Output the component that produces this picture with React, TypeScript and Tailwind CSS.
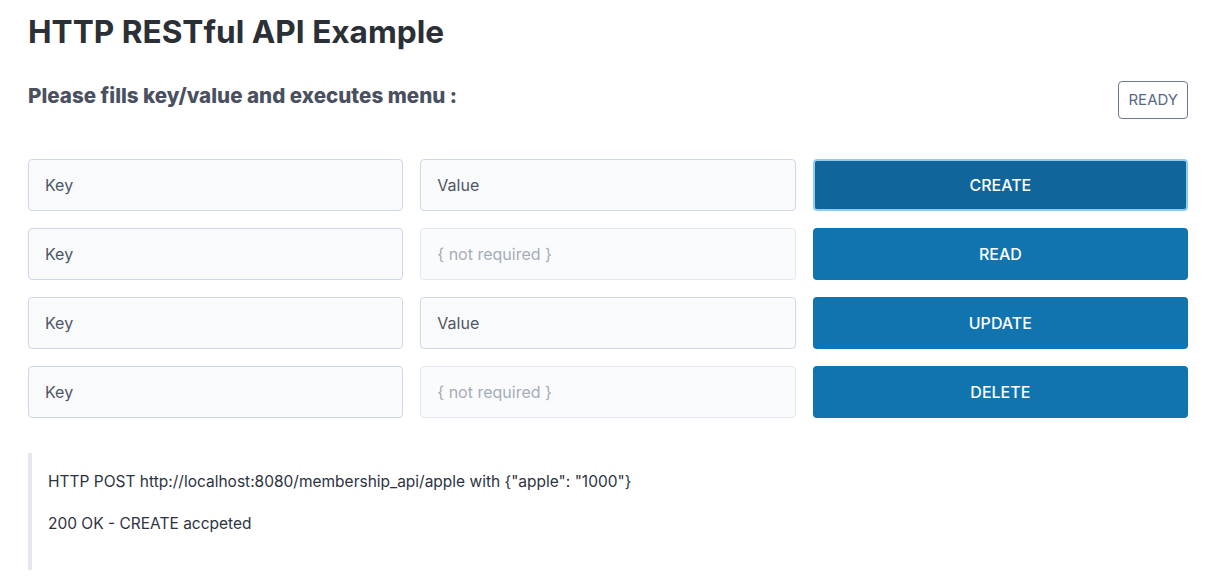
import { useState } from "react";

const rows = [
  { action: "CREATE", needsValue: true },
  { action: "READ", needsValue: false },
  { action: "UPDATE", needsValue: true },
  { action: "DELETE", needsValue: false },
];

const App = () => {
  const [active] = useState("CREATE");

  return (
    <div className="min-h-screen bg-white pl-[28px] pr-[30px] pt-[12px] font-['Inter',sans-serif] text-[#2d3748]">
      <h1 className="text-[31.6px] font-bold leading-[40px] text-[#2b2f36]">HTTP RESTful API Example</h1>

      <div className="mt-[29px] flex items-start justify-between">
        <h2 className="text-[20.6px] font-extrabold leading-[30px] text-[#4a5060]">
          Please fills key/value and executes menu :
        </h2>
        <span className="rounded border border-[#6b7a90] px-[9px] py-[8px] text-[15px] leading-[20px] text-[#5a6a85]">
          READY
        </span>
      </div>

      <div className="mt-[40px] flex flex-col gap-[17px]">
        {rows.map((r) => (
          <div key={r.action} className="grid grid-cols-3 gap-[17px]">
            <input
              placeholder="Key"
              className="h-[52px] rounded border border-[#cfd8e3] bg-[#f9fafb] px-[16px] text-[16px] outline-none placeholder:text-[#4f5663]"
            />
            {r.needsValue ? (
              <input
                placeholder="Value"
                className="h-[52px] rounded border border-[#cfd8e3] bg-[#f9fafb] px-[16px] text-[16px] outline-none placeholder:text-[#4f5663]"
              />
            ) : (
              <input
                disabled
                placeholder="{ not required }"
                className="h-[52px] rounded border border-[#e4e8ee] bg-[#fafbfc] px-[16px] text-[16px] outline-none placeholder:text-[#a5adb9]"
              />
            )}
            <button
              className={`h-[52px] rounded text-[16px] font-medium text-white ${
                active === r.action
                  ? "border-2 border-[#8fcdf0] bg-[#10659a]"
                  : "bg-[#1174ae]"
              }`}
            >
              {r.action}
            </button>
          </div>
        ))}
      </div>

      <blockquote className="mt-[35px] h-[117px] border-l-4 border-[#e5e8f0] pl-[16px] pt-[17px] text-[15.5px] leading-[24px] text-[#2d3340]">
        <p>HTTP POST http://localhost:8080/membership_api/apple with {'{"apple": "1000"}'}</p>
        <p className="mt-[18px]">200 OK - CREATE accpeted</p>
      </blockquote>
    </div>
  );
};

export default App;
